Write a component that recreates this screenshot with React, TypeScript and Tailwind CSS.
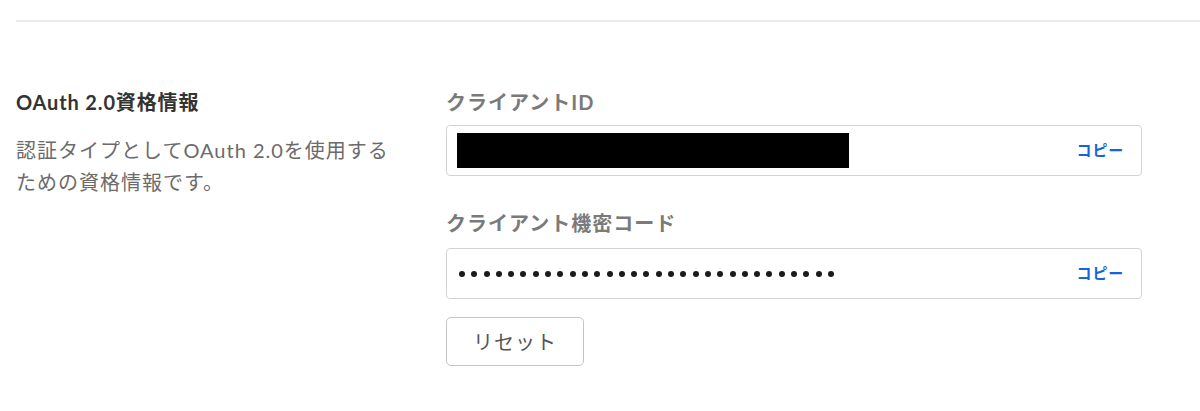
import React from "react";

const FONT = { fontFamily: 'Lato, "Noto Sans CJK JP", sans-serif' };

function Dots({ n }: { n: number }) {
  return (
    <div className="flex items-center gap-[6.3px]" aria-label="password">
      {Array.from({ length: n }).map((_, i) => (
        <span key={i} className="block w-[6px] h-[6px] rounded-full bg-[#1a1a1a]" />
      ))}
    </div>
  );
}

export default function App() {
  return (
    <div className="w-[1200px] h-[411px] bg-white overflow-hidden" style={FONT}>
      <div className="pt-[20px]">
        <div className="ml-4 h-[2px] bg-[#ececec]" />
      </div>
      <div className="flex pl-4 pt-[66px]">
        <div className="w-[430px] shrink-0">
          <h2 className="text-[20px] leading-[28px] font-bold text-[#333333] tracking-[0.85px]">
            OAuth 2.0資格情報
          </h2>
          <p className="mt-[18px] text-[20px] leading-[32px] text-[#6b6b6b] w-[380px] tracking-[1px]">
            認証タイプとしてOAuth 2.0を使用するための資格情報です。
          </p>
        </div>
        <div className="w-[696px] shrink-0">
          <div className="text-[20px] leading-[28px] font-bold text-[#7a7a7a] tracking-[1px]">
            クライアントID
          </div>
          <div className="mt-[9px] h-[51px] border border-[#d2d2d2] rounded-[4px] flex items-center justify-between pl-[10px] pr-[17px]">
            <div className="w-[392px] h-[35px] bg-black" />
            <span className="text-[15px] text-[#1565d8] font-bold tracking-[0.8px]">コピー</span>
          </div>
          <div className="mt-[33px] text-[20px] leading-[28px] font-bold text-[#7a7a7a] tracking-[1px]">
            クライアント機密コード
          </div>
          <div className="mt-[11px] h-[51px] border border-[#d2d2d2] rounded-[4px] flex items-center justify-between pl-[12px] pr-[17px]">
            <Dots n={31} />
            <span className="text-[15px] text-[#1565d8] font-bold tracking-[0.8px]">コピー</span>
          </div>
          <button className="mt-[18px] w-[138px] h-[49px] border border-[#c4c4c4] rounded-[5px] bg-white text-[20px] text-[#555555] tracking-[1px]">
            リセット
          </button>
        </div>
      </div>
    </div>
  );
}
